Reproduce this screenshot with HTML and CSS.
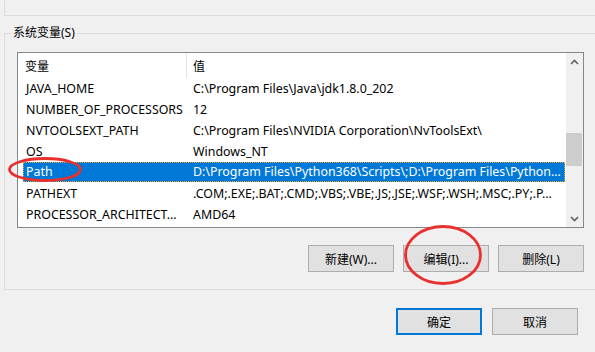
FILE: index.html
```html
<!DOCTYPE html>
<html lang="zh-CN">
<head>
  <meta charset="UTF-8" />
  <title>环境变量</title>
  <link rel="stylesheet" href="styles.css">
</head>
<body>

  <div class="user-group"></div>

  <fieldset class="group">
    <legend>系统变量(S)</legend>

    <div class="listview">
      <div class="list-body">
        <div class="list-head">
          <div class="col-name">变量</div>
          <div class="col-value">值</div>
        </div>
        <div class="row"><div class="col-name">JAVA_HOME</div><div class="col-value">C:\Program Files\Java\jdk1.8.0_202</div></div>
        <div class="row"><div class="col-name">NUMBER_OF_PROCESSORS</div><div class="col-value">12</div></div>
        <div class="row"><div class="col-name">NVTOOLSEXT_PATH</div><div class="col-value">C:\Program Files\NVIDIA Corporation\NvToolsExt\</div></div>
        <div class="row"><div class="col-name">OS</div><div class="col-value">Windows_NT</div></div>
        <div class="row selected"><div class="col-name">Path</div><div class="col-value">D:\Program Files\Python368\Scripts\;D:\Program Files\Python...</div></div>
        <div class="row"><div class="col-name">PATHEXT</div><div class="col-value">.COM;.EXE;.BAT;.CMD;.VBS;.VBE;.JS;.JSE;.WSF;.WSH;.MSC;.PY;.P...</div></div>
        <div class="row"><div class="col-name">PROCESSOR_ARCHITECT...</div><div class="col-value">AMD64</div></div>
      </div>
      <div class="scrollbar">
        <div class="arrow">
          <svg width="9" height="6" viewBox="0 0 9 6"><path d="M1 5 L4.5 1.5 L8 5" /></svg>
        </div>
        <div class="track">
          <div class="thumb"></div>
        </div>
        <div class="arrow">
          <svg width="9" height="6" viewBox="0 0 9 6"><path d="M1 1 L4.5 4.5 L8 1" /></svg>
        </div>
      </div>
    </div>

    <div class="actions">
      <button class="btn">新建(W)...</button>
      <button class="btn">编辑(I)...</button>
      <button class="btn">删除(L)</button>
    </div>
  </fieldset>

  <div class="footer">
    <button class="btn btn-default">确定</button>
    <button class="btn">取消</button>
  </div>

  <svg class="marks" viewBox="0 0 595 352">
    <ellipse cx="45" cy="169.5" rx="35.5" ry="11" />
    <ellipse cx="443" cy="255" rx="37.5" ry="28.5" />
  </svg>

</body>
</html>
```

FILE: styles.css
```css
body {
  margin: 0;
  height: 352px;
  background: #f0f0f0;
  font-family: "Noto Sans", "Noto Sans CJK SC", sans-serif;
  font-size: 12px;
  color: #000;
  overflow: hidden;
  position: relative;
}

.user-group {
  height: 15px;
  margin-left: 4px;
  margin-right: -10px;
  border-left: 1px solid #dcdcdc;
  border-bottom: 1px solid #dcdcdc;
}

.group {
  margin: 9px -20px 0 4px;
  padding: 11px 0 17px 12px;
  border: 1px solid #dcdcdc;
  min-width: 0;
}

.group legend {
  margin-left: -6px;
  padding: 0 2px;
  line-height: 16px;
}

.listview {
  width: 565px;
  height: 174px;
  border: 1px solid #828790;
  background: #fff;
  display: flex;
}

.list-body {
  flex: 1;
  overflow: hidden;
}

.list-head,
.row {
  display: flex;
  white-space: nowrap;
}

.list-head {
  height: 25px;
  align-items: center;
}

.list-head .col-name {
  width: 161px;
  padding-left: 7px;
  border-right: 1px solid #e5e5e5;
  align-self: stretch;
  display: flex;
  align-items: center;
}

.list-head .col-value {
  padding-left: 6px;
}

.row {
  height: 21px;
  line-height: 21px;
  margin: 0 1px 0 5px;
  font-size: 12.4px;
}

.row .col-name {
  width: 160px;
  padding-left: 3px;
  overflow: hidden;
}

.row .col-value {
  flex: 1;
  padding-left: 7px;
  overflow: hidden;
}

.row.selected {
  background: #0078d7;
  color: #fff;
  outline: 1px dotted #e8a33c;
  outline-offset: -1px;
  height: 20px;
  line-height: 20px;
  margin-bottom: 1px;
}

.scrollbar {
  width: 17px;
  display: flex;
  flex-direction: column;
  background: #f0f0f0;
}

.arrow {
  height: 17px;
  display: flex;
  align-items: center;
  justify-content: center;
}

.arrow path {
  fill: none;
  stroke: #606060;
  stroke-width: 1.6;
}

.track {
  flex: 1;
  padding-top: 63px;
}

.thumb {
  height: 33px;
  margin: 0 1px 0 0;
  background: #cdcdcd;
}

.actions {
  width: 567px;
  margin-top: 17px;
  display: flex;
  justify-content: flex-end;
  gap: 9px;
}

.btn {
  width: 86px;
  height: 27px;
  padding: 0;
  background: #e1e1e1;
  border: 1px solid #adadad;
  font-family: inherit;
  font-size: 12px;
  color: #000;
}

.btn-default {
  border: 2px solid #0078d7;
}

.footer {
  margin-top: 18px;
  padding-right: 17px;
  display: flex;
  justify-content: flex-end;
  gap: 10px;
}

.marks {
  position: absolute;
  top: 0;
  left: 0;
  width: 595px;
  height: 352px;
  pointer-events: none;
}

.marks ellipse {
  fill: none;
  stroke: #e8302f;
  stroke-width: 2.8;
}
```
